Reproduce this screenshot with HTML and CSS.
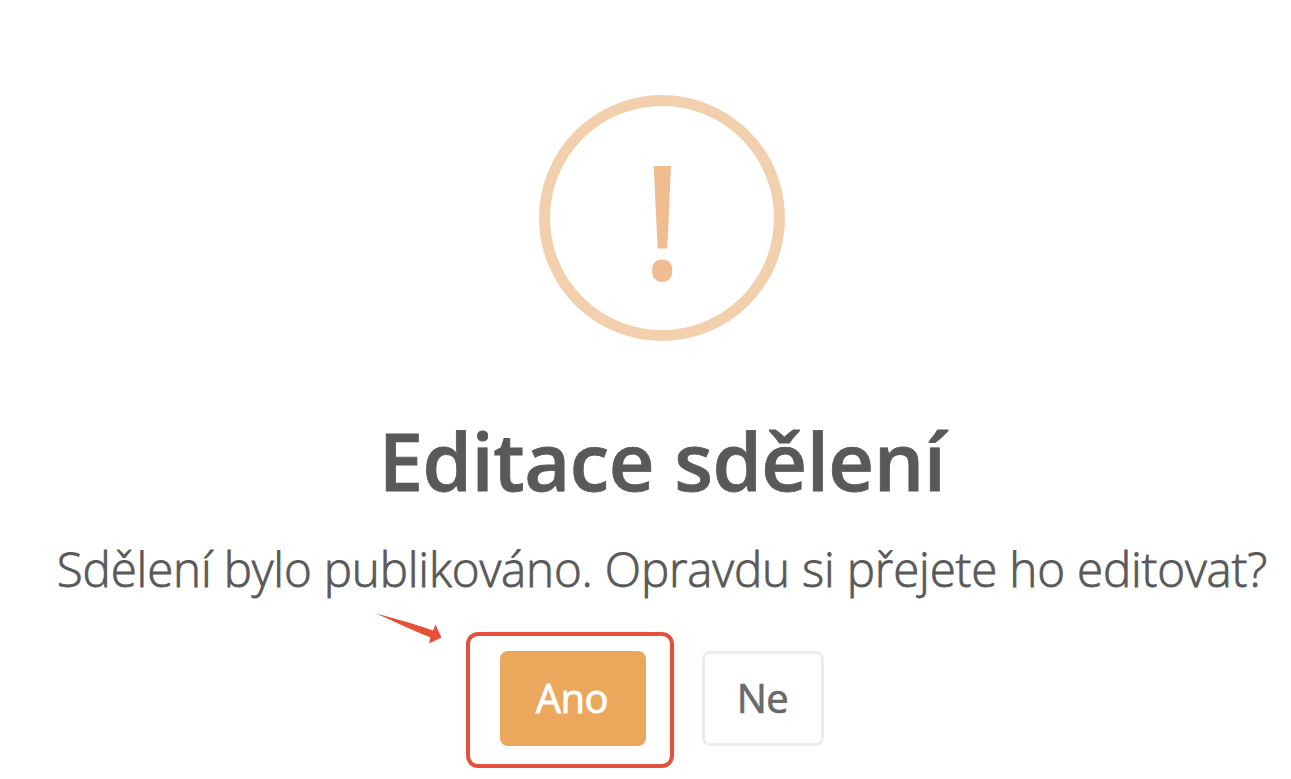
FILE: index.html
```html
<!DOCTYPE html>
<html lang="cs">
<head>
  <meta charset="utf-8">
  <title>Editace sdělení</title>
  <link rel="stylesheet" href="styles.css">
</head>
<body>
  <div class="modal" role="dialog">
    <div class="modal-icon">
      <svg width="22" height="118" viewBox="0 0 22 118">
        <path d="M2.700 1H20L16.300 83.500H6.600Z"/>
        <path d="M11.200 94.500C17.500 94.500 21.300 98 21.300 105.500C21.300 113 17.500 117 11.200 117C5 117 1.100 113 1.100 105.500C1.100 98 5 94.500 11.200 94.500Z"/>
      </svg>
    </div>
    <h2 class="modal-title">Editace sdělení</h2>
    <p class="modal-text">Sdělení bylo publikováno. Opravdu si přejete ho editovat?</p>
    <div class="modal-actions">
      <div class="highlight">
        <button class="btn btn-confirm">Ano</button>
        <svg class="arrow" width="66" height="32" viewBox="0 0 66 32">
          <path d="M0 0.500C20 6 38 10.500 57 17.500L59.500 11.500L65.500 24.500L53 30.500L54.500 24.500C36 17 18 8.500 0 0.500Z"/>
        </svg>
      </div>
      <button class="btn btn-cancel">Ne</button>
    </div>
  </div>
</body>
</html>
```

FILE: styles.css
```css
body {
  margin: 0;
  background: #fff;
  font-family: "Open Sans", sans-serif;
  color: #595959;
  overflow: hidden;
}

.modal {
  display: flex;
  flex-direction: column;
  align-items: center;
  width: 1324px;
  padding-top: 95px;
}

.modal-icon {
  display: flex;
  align-items: center;
  justify-content: center;
  box-sizing: border-box;
  width: 246px;
  height: 246px;
  border: 11px solid #f3d0ad;
  border-radius: 50%;
  padding-top: 12px;
}

.modal-icon svg {
  fill: #f0bd90;
}

.modal-title {
  margin: 64px 0 0;
  font-size: 79.5px;
  line-height: 110px;
  font-weight: 600;
  letter-spacing: -0.5px;
  white-space: nowrap;
  -webkit-text-stroke: 0.8px #595959;
}

.modal-text {
  margin: 21px 0 0;
  font-size: 47.5px;
  line-height: 66px;
  font-weight: 300;
  letter-spacing: -0.18px;
  white-space: nowrap;
  -webkit-text-stroke: 0.8px #595959;
}

.modal-actions {
  display: flex;
  align-items: flex-start;
  gap: 28px;
  margin-top: 30px;
  margin-right: 34px;
}

.highlight {
  position: relative;
  box-sizing: border-box;
  width: 208px;
  height: 136px;
  padding: 15px 30px;
  border: 4px solid #e5503c;
  border-radius: 12px;
}

.arrow {
  position: absolute;
  left: -94px;
  top: -23px;
  fill: #e74f38;
}

.btn {
  display: block;
  box-sizing: border-box;
  height: 95px;
  padding: 0 1px 2px 0;
  border: 0;
  border-radius: 8px;
  font: 400 40px "Open Sans", sans-serif;
}

.btn-confirm {
  width: 146px;
  padding-right: 2px;
  background: #eba75c;
  color: #fff;
  letter-spacing: -0.5px;
  -webkit-text-stroke: 0.8px #fff;
}

.btn-cancel {
  width: 122px;
  margin-top: 19px;
  border: 3px solid #ebeced;
  background: #fff;
  color: #6a6a6a;
  letter-spacing: -0.5px;
  -webkit-text-stroke: 0.7px #6a6a6a;
}
```
